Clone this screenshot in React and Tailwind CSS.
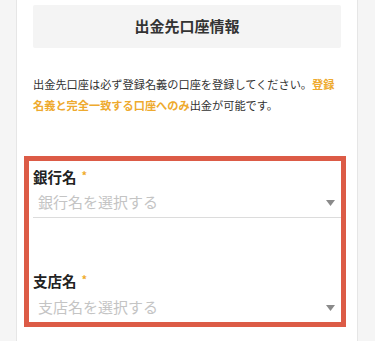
import React from 'react';

const font = { fontFamily: '"Noto Sans CJK JP", "Noto Sans", sans-serif' };

function SelectField({ label, placeholder, last }) {
  return (
    <div>
      <div className="flex items-start h-[16px] text-[14.5px] leading-[16px] font-bold text-[#222]">
        <span>{label}</span>
        <span className="ml-[5px] mt-[1px] text-[11px] leading-[10px] text-[#f0ab2c]">*</span>
      </div>
      <div
        className={`h-[33px] pt-[3px] pl-[5px] pr-[6px] flex items-center justify-between ${
          last ? '' : 'border-b border-[#dcdcdc]'
        }`}
      >
        <span className="text-[15px] text-[#c4c4c4]">{placeholder}</span>
        <svg width="9" height="6" viewBox="0 0 9 6" className="mt-[1px]">
          <path d="M0 0H9L4.5 6Z" fill="#8a8a8a" />
        </svg>
      </div>
    </div>
  );
}

export default function App() {
  return (
    <div className="min-h-screen bg-[#f5f5f5]" style={font}>
      <div className="ml-[16px] w-[342px] min-h-[341px] bg-white border-x border-[#e6e6e6] px-[16px] pt-[5px]">
        <div className="h-[43px] bg-[#f4f4f4] rounded-[2px] flex items-center justify-center text-[15px] font-bold text-[#333]">
          出金先口座情報
        </div>

        <p className="mt-[26px] text-[11.2px] leading-[21px] text-[#333]">
          出金先口座は必ず登録名義の口座を登録してください。
          <span className="font-bold text-[#eeaa2e]">登録名義と完全一致する口座へのみ</span>
          出金が可能です。
        </p>

        <div className="mt-[40px] ml-[-9px] mr-[-5px] border-[5px] border-[#dc5b46] pl-[4px] pt-[8px]">
          <SelectField label="銀行名" placeholder="銀行名を選択する" />
          <div className="mt-[55px]">
            <SelectField label="支店名" placeholder="支店名を選択する" last />
          </div>
        </div>
      </div>
    </div>
  );
}
